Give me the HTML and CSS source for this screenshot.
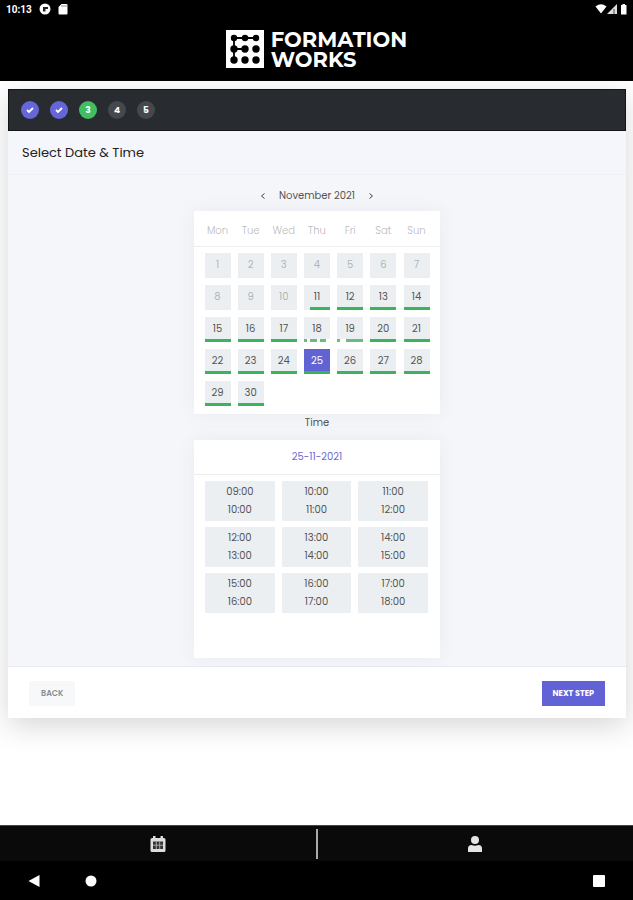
FILE: index.html
```html
<!DOCTYPE html>
<html lang="en">
  <head>
    <meta charset="UTF-8" />
    <meta name="viewport" content="width=device-width, initial-scale=1.0" />
    <title>Formation Works</title>
    <link rel="stylesheet" href="styles.css">
  </head>
  <body>
    <div class="status-bar">
      <span class="clock">10:13</span>
      <svg width="12" height="12" viewBox="0 0 12 12">
        <circle cx="6" cy="6" r="5.5" fill="#fff" />
        <path d="M4 8.500V4h5v2H6.500v2.500z" fill="#222" />
      </svg>
      <svg class="sd-card" width="10" height="12" viewBox="0 0 10 12">
        <path d="M3.500 1H8.500a1 1 0 0 1 1 1v8.500a1 1 0 0 1-1 1h-7a1 1 0 0 1-1-1V4z" fill="#fff" />
        <path d="M4 2v2M6 2v2M8 2v2" stroke="#777" stroke-width=".8" />
      </svg>
      <svg class="signals" width="34" height="12" viewBox="0 0 34 12">
        <path d="M0.500 3.500Q6 -1 11.500 3.500L6 10.500z" fill="#fff" />
        <path d="M22 1v10H12z" fill="#ddd" />
        <path d="M19 6v5" stroke="#444" />
        <path d="M27.500 2V1h2.500v1h1.500v9.500H26V2z" fill="#fff" />
      </svg>
    </div>

    <header class="header">
      <svg width="38" height="38" viewBox="0 0 38 38">
        <rect width="38" height="38" fill="#fff" />
        <g fill="#000">
          <circle cx="8" cy="8" r="3.200" />
          <circle cx="19" cy="8" r="3.200" />
          <circle cx="30" cy="8" r="3.200" />
          <circle cx="8" cy="19" r="3.700" />
          <circle cx="19" cy="19" r="3.700" />
          <circle cx="30" cy="19" r="3.700" />
          <circle cx="8" cy="30" r="3.700" />
          <circle cx="19" cy="30" r="3.700" />
          <circle cx="30" cy="30" r="3.700" />
        </g>
        <path d="M30 8H8V30M8 19H19" fill="none" stroke="#000" stroke-width="1.800" />
      </svg>
      <div class="brand">FORMATION<br />WORKS</div>
    </header>

    <main>
      <div class="card">
        <ol class="steps">
          <li class="done">
            <svg width="8" height="8" viewBox="0 0 8 8"><path d="M1 4l2 2 4-4" fill="none" stroke="#fff" stroke-width="1.800" /></svg>
          </li>
          <li class="done">
            <svg width="8" height="8" viewBox="0 0 8 8"><path d="M1 4l2 2 4-4" fill="none" stroke="#fff" stroke-width="1.800" /></svg>
          </li>
          <li class="current">3</li>
          <li>4</li>
          <li>5</li>
        </ol>

        <h1>Select Date &amp; Time</h1>

        <div class="booking">
          <div class="month">
            <button type="button" aria-label="Previous month">
              <svg width="6" height="8" viewBox="0 0 6 8"><path d="M4.500 1.500L1.500 4l3 2.500" fill="none" stroke="#444" /></svg>
            </button>
            <span>November 2021</span>
            <button type="button" aria-label="Next month">
              <svg width="6" height="8" viewBox="0 0 6 8"><path d="M1.500 1.500L4.500 4l-3 2.500" fill="none" stroke="#444" /></svg>
            </button>
          </div>

          <table class="calendar">
            <thead>
              <tr>
                <th>Mon</th>
                <th>Tue</th>
                <th>Wed</th>
                <th>Thu</th>
                <th>Fri</th>
                <th>Sat</th>
                <th>Sun</th>
              </tr>
            </thead>
            <tbody>
              <tr>
                <td><button type="button" disabled>1</button></td>
                <td><button type="button" disabled>2</button></td>
                <td><button type="button" disabled>3</button></td>
                <td><button type="button" disabled>4</button></td>
                <td><button type="button" disabled>5</button></td>
                <td><button type="button" disabled>6</button></td>
                <td><button type="button" disabled>7</button></td>
              </tr>
              <tr>
                <td><button type="button" disabled>8</button></td>
                <td><button type="button" disabled>9</button></td>
                <td><button type="button" disabled>10</button></td>
                <td><button type="button" class="late">11</button></td>
                <td><button type="button">12</button></td>
                <td><button type="button">13</button></td>
                <td><button type="button">14</button></td>
              </tr>
              <tr>
                <td><button type="button">15</button></td>
                <td><button type="button">16</button></td>
                <td><button type="button">17</button></td>
                <td><button type="button" class="broken">18</button></td>
                <td><button type="button" class="gap">19</button></td>
                <td><button type="button">20</button></td>
                <td><button type="button">21</button></td>
              </tr>
              <tr>
                <td><button type="button">22</button></td>
                <td><button type="button">23</button></td>
                <td><button type="button">24</button></td>
                <td><button type="button" class="selected">25</button></td>
                <td><button type="button">26</button></td>
                <td><button type="button">27</button></td>
                <td><button type="button">28</button></td>
              </tr>
              <tr>
                <td><button type="button">29</button></td>
                <td><button type="button">30</button></td>
                <td></td>
                <td></td>
                <td></td>
                <td></td>
                <td></td>
              </tr>
            </tbody>
          </table>

          <h2>Time</h2>

          <div class="times">
            <div class="chosen-date">25-11-2021</div>
            <div class="slots">
              <button type="button">09:00<br />10:00</button>
              <button type="button">10:00<br />11:00</button>
              <button type="button">11:00<br />12:00</button>
              <button type="button">12:00<br />13:00</button>
              <button type="button">13:00<br />14:00</button>
              <button type="button">14:00<br />15:00</button>
              <button type="button">15:00<br />16:00</button>
              <button type="button">16:00<br />17:00</button>
              <button type="button">17:00<br />18:00</button>
            </div>
          </div>
        </div>

        <div class="actions">
          <button type="button" class="back">BACK</button>
          <button type="button" class="next">NEXT STEP</button>
        </div>
      </div>
    </main>

    <nav class="tabs">
      <a href="#bookings" aria-label="Bookings">
        <svg width="16" height="18" viewBox="0 0 16 18">
          <path d="M3 1h2.500v2h5V1H13v2h1a1.500 1.500 0 0 1 1.500 1.500V15.500A1.500 1.500 0 0 1 14 17H2A1.500 1.500 0 0 1 .5 15.500v-11A1.500 1.500 0 0 1 2 3h1z" fill="#ddd" />
          <path d="M3 6.500h10v7.500H3z" fill="#333" />
          <path d="M3 10.200h10M6.300 6.500v7.500M9.700 6.500v7.500" stroke="#aaa" />
        </svg>
      </a>
      <span class="divider"></span>
      <a href="#account" aria-label="Account">
        <svg width="16" height="18" viewBox="0 0 16 18">
          <circle cx="8" cy="5" r="4" fill="#e4e4e4" />
          <path d="M1 17v-3.500a3.500 3.500 0 0 1 3.500-3.500Q8 11.500 11.500 10A3.500 3.500 0 0 1 15 13.500V17z" fill="#e4e4e4" />
        </svg>
      </a>
    </nav>

    <div class="system-nav">
      <button type="button" aria-label="Back">
        <svg width="12" height="12" viewBox="0 0 12 12"><path d="M11.500 0v12L0.500 6z" fill="#fff" /></svg>
      </button>
      <button type="button" aria-label="Home">
        <svg width="12" height="12" viewBox="0 0 12 12"><circle cx="6" cy="6" r="5.500" fill="#fff" /></svg>
      </button>
      <button type="button" class="recent" aria-label="Recent apps">
        <svg width="12" height="12" viewBox="0 0 12 12"><rect width="12" height="12" rx="1" fill="#fff" /></svg>
      </button>
    </div>
  </body>
</html>
```
FILE: styles.css
```css
* {
  margin: 0;
  padding: 0;
  box-sizing: border-box;
}
body {
  display: flex;
  flex-direction: column;
  min-height: 100vh;
  font-family: Poppins, Inter, sans-serif;
  font-size: 10px;
  color: #555;
  background-color: #fff;
}
button {
  border: none;
  background: none;
  font: inherit;
  color: inherit;
  cursor: pointer;
}
svg {
  display: block;
}
.status-bar {
  display: flex;
  align-items: center;
  gap: 7px;
  height: 18px;
  padding: 0 4px 0 6px;
  background-color: #000;
}
.clock {
  font-family: Roboto, sans-serif;
  font-weight: 700;
  color: #fff;
}
.signals {
  margin-left: auto;
}
.header {
  display: flex;
  justify-content: center;
  gap: 7px;
  height: 63px;
  padding-top: 12px;
  background-color: #000;
}
.brand {
  font-family: Montserrat, Inter, sans-serif;
  font-size: 21px;
  font-weight: 700;
  line-height: 20px;
  color: #fff;
}
main {
  flex: 1;
  padding: 8px 7px 24px 8px;
  overflow: hidden;
}
.card {
  background-color: #fff;
  box-shadow: 0 8px 28px rgba(0, 0, 0, 0.16);
}
.steps {
  display: flex;
  align-items: center;
  gap: 11px;
  height: 42px;
  padding: 0 12px;
  list-style: none;
  background-color: #282c30;
  border: 1px solid #121518;
}
.steps li {
  display: flex;
  align-items: center;
  justify-content: center;
  width: 18px;
  height: 18px;
  border-radius: 50%;
  font-size: 9px;
  font-weight: 700;
  color: #fff;
  background-color: #45494d;
}
.steps .done {
  background-color: #6567d8;
}
.steps .current {
  background-color: #42bd62;
}
h1 {
  padding: 0 14px;
  font-size: 13px;
  font-weight: 400;
  line-height: 43px;
  color: #222;
  background-color: #f5f6fb;
  border-bottom: 1px solid #eff1f6;
}
.booking {
  display: flex;
  flex-direction: column;
  align-items: center;
  padding-bottom: 8px;
  background-color: #f4f6fa;
  border-bottom: 1px solid #e9eaf4;
}
.month {
  display: flex;
  align-items: center;
  gap: 9px;
  height: 36px;
  padding-top: 5px;
}
.month button {
  padding: 4px;
}
.calendar,
.times {
  width: 246px;
  background-color: #fff;
  box-shadow: 0 0 18px rgba(60, 70, 90, 0.06);
}
.calendar {
  table-layout: fixed;
  border-collapse: separate;
  border-spacing: 0;
  padding-bottom: 5px;
}
.calendar th {
  height: 36px;
  padding-top: 4px;
  font-weight: 300;
  color: #bbb;
  border-bottom: 1px solid #eee;
}
.calendar th:first-child,
.calendar td:first-child {
  width: 40px;
  padding-left: 7px;
}
.calendar th:last-child,
.calendar td:last-child {
  width: 40px;
  padding-right: 7px;
}
.calendar td {
  height: 32px;
  text-align: center;
}
.calendar tbody tr:first-child td {
  height: 34px;
  padding-top: 2px;
}
.calendar td button {
  display: block;
  width: 26px;
  height: 25px;
  margin: 0 auto;
  background: linear-gradient(#39b45b, #39b45b) right bottom / 100% 3px no-repeat #eceff1;
}
.calendar td button:disabled {
  color: #b0b5b9;
  background: #eceff1;
}
.calendar td .late {
  background-size: 20px 3px;
}
.calendar td .broken {
  background-image: linear-gradient(90deg, #66bd7c 3px, #fff 3px, #fff 6px, #66bd7c 6px, #66bd7c 13px, #fff 13px, #fff 16px, #66bd7c 16px, #66bd7c 22px, #fff 22px);
}
.calendar td .gap {
  background-image: linear-gradient(90deg, #66bd7c 3px, #fff 3px, #fff 9px, #66bd7c 9px);
}
.calendar td .selected {
  color: #fff;
  background-color: #6163d3;
}
h2 {
  font-size: 10px;
  font-weight: 400;
  line-height: 18px;
  padding-bottom: 8px;
}
.times {
  min-height: 218px;
}
.chosen-date {
  line-height: 34px;
  text-align: center;
  color: #7068d2;
  border-bottom: 1px solid #eee;
}
.slots {
  display: grid;
  grid-template-columns: repeat(3, 1fr);
  gap: 6px 7px;
  padding: 6px 12px 6px 11px;
}
.slots button {
  height: 40px;
  line-height: 18px;
  background-color: #eceff1;
  border-radius: 1px;
}
.actions {
  display: flex;
  justify-content: space-between;
  padding: 14px 21px 12px;
}
.actions button {
  height: 25px;
  padding: 0 11px;
  font-size: 8px;
  font-weight: 600;
}
.actions .back {
  padding: 0 12px;
  color: #868d96;
  background-color: #f6f8fa;
}
.actions .next {
  font-weight: 700;
  color: #fff;
  background-color: #6062d6;
}
.tabs {
  display: flex;
  align-items: center;
  height: 36px;
  background-color: #0a0a0a;
  border-top: 1px solid #444;
}
.tabs a {
  display: flex;
  flex: 1;
  justify-content: center;
}
.tabs .divider {
  width: 2px;
  height: 30px;
  background-color: #aaa;
}
.system-nav {
  display: flex;
  align-items: center;
  gap: 45px;
  height: 39px;
  padding: 0 28px;
  background-color: #000;
}
.system-nav .recent {
  margin-left: auto;
}
```
